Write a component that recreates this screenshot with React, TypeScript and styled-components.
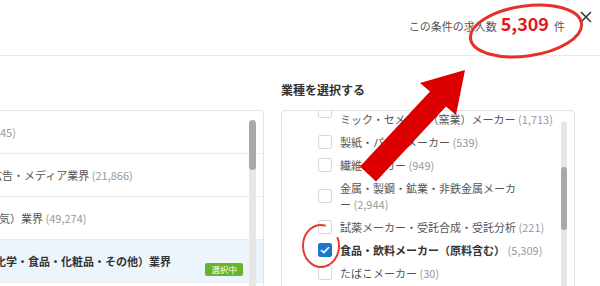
import React from "react";
import styled, { createGlobalStyle } from "styled-components";

const GlobalStyle = createGlobalStyle`
  html, body {
    margin: 0;
    padding: 0;
    background: #fff;
  }
  body {
    font-family: "Noto Sans CJK JP", "Noto Sans", sans-serif;
    color: #555;
  }
`;

const Page = styled.div`
  position: relative;
  width: 600px;
  height: 286px;
  overflow: hidden;
  background: #fff;
`;

const Header = styled.header`
  height: 56px;
  box-sizing: border-box;
  border-bottom: 1px solid #e8e8e8;
  display: flex;
  align-items: flex-start;
  justify-content: flex-end;
  padding-right: 8px;
`;

const Count = styled.div`
  display: flex;
  align-items: baseline;
  padding-top: 13px;
  line-height: 20px;
  font-size: 11px;
  color: #555;
`;

const Num = styled.strong`
  font-size: 18px;
  font-weight: 700;
  color: #e8141b;
  margin: 0 5px 0 4px;
`;

const Close = styled.button`
  border: 0;
  background: none;
  padding: 0;
  margin: 11px 0 0 15px;
  width: 12px;
  height: 12px;
  display: flex;
  color: #333;
`;

const Body = styled.div`
  display: grid;
  grid-template-columns: 300px 294px;
  grid-template-rows: 20px auto;
  column-gap: 17px;
  row-gap: 10px;
  margin-left: -36px;
  padding-top: 24px;
`;

const Title = styled.h3`
  grid-column: 2;
  grid-row: 1;
  margin: 0;
  font-size: 12px;
  line-height: 20px;
  font-weight: 700;
  color: #333;
`;

const Box = styled.div<{ $col: number }>`
  grid-column: ${(p) => p.$col};
  grid-row: 2;
  position: relative;
  height: 200px;
  border: 1px solid #e4e4e4;
  border-radius: 4px;
  overflow: hidden;
`;

const Track = styled.div<{ $right: number; $top: number; $w: number }>`
  position: absolute;
  right: ${(p) => p.$right}px;
  top: ${(p) => p.$top}px;
  bottom: 0;
  width: ${(p) => p.$w}px;
  border-radius: 4px;
  background: #e6e6e6;
`;

const Thumb = styled.div<{ $offset: number; $size: number }>`
  margin-top: ${(p) => p.$offset}px;
  height: ${(p) => p.$size}px;
  border-radius: 4px;
  background: #a9a9a9;
`;

const Row = styled.div<{ $selected?: boolean }>`
  display: flex;
  align-items: center;
  height: 42px;
  border-bottom: 1px solid #ebebeb;
  padding-right: 20px;
  font-size: 11px;
  line-height: 16px;
  white-space: nowrap;
  background: ${(p) => (p.$selected ? "#edf5fc" : "#fff")};
`;

const RowLabel = styled.span<{ $shift: number; $bold?: boolean }>`
  margin-left: ${(p) => p.$shift + 35}px;
  font-weight: ${(p) => (p.$bold ? 700 : 400)};
  color: ${(p) => (p.$bold ? "#333" : "#555")};
`;

const Muted = styled.span`
  color: #999;
  font-weight: 400;
  white-space: nowrap;
`;

const Badge = styled.span`
  margin-left: auto;
  align-self: flex-end;
  margin-bottom: 6px;
  height: 13px;
  line-height: 13px;
  padding: 0 6px;
  border-radius: 2px;
  background: #68b32c;
  color: #fff;
  font-size: 8.5px;
`;

const CheckList = styled.ul`
  list-style: none;
  margin: -20px 0 0;
  padding: 0 20px 0 36px;
`;

const Item = styled.li`
  display: flex;
  align-items: center;
  gap: 8px;
  padding: 3.5px 0;
  font-size: 11px;
  line-height: 16px;
`;

const Check = styled.span<{ $on?: boolean }>`
  flex-shrink: 0;
  width: 14px;
  height: 14px;
  box-sizing: border-box;
  border-radius: 2px;
  border: 1px solid ${(p) => (p.$on ? "#1b78cf" : "#d9d9d9")};
  background: ${(p) => (p.$on ? "#1b78cf" : "#fff")};
  display: flex;
  align-items: center;
  justify-content: center;
`;

const ItemText = styled.span<{ $bold?: boolean }>`
  flex: 1;
  color: ${(p) => (p.$bold ? "#333" : "#555")};
  font-weight: ${(p) => (p.$bold ? 700 : 400)};
`;

const Overlay = styled.svg`
  position: absolute;
  left: 0;
  top: 0;
  pointer-events: none;
`;

const rows = [
  { label: "", count: "(6,745)", shift: -19 },
  { label: "広告・メディア業界", count: "(21,866)", shift: -9 },
  { label: "電気）業界", count: "(49,274)", shift: -12 },
  { label: "化学・食品・化粧品・その他）業界", shift: -5, selected: true },
];

const items: { label: React.ReactNode; count: string; on?: boolean }[] = [
  {
    label: (
      <>
        ガラス・耐火物・セラ
        <br />
        ミック・セメント（窯業）メーカー
      </>
    ),
    count: "(1,713)",
  },
  { label: "製紙・パルプメーカー", count: "(539)" },
  { label: "繊維メーカー", count: "(949)" },
  { label: "金属・製鋼・鉱業・非鉄金属メーカー", count: "(2,944)" },
  { label: "試薬メーカー・受託合成・受託分析", count: "(221)" },
  { label: "食品・飲料メーカー（原料含む）", count: "(5,309)", on: true },
  { label: "たばこメーカー", count: "(30)" },
  { label: "化粧品メーカー", count: "(1,102)" },
];

const App = () => (
  <Page>
    <GlobalStyle />
    <Header>
      <Count>
        この条件の求人数<Num>5,309</Num>件
      </Count>
      <Close aria-label="閉じる">
        <svg width="12" height="12" viewBox="0 0 12 12">
          <path d="M1 1 L11 11 M11 1 L1 11" stroke="#333" strokeWidth="1.5" />
        </svg>
      </Close>
    </Header>

    <Body>
      <Title>業種を選択する</Title>

      <Box $col={1}>
        {rows.map((r) => (
          <Row key={r.count ?? r.label} $selected={r.selected}>
            <RowLabel $shift={r.shift} $bold={r.selected}>
              {r.label}
              {r.count && <Muted> {r.count}</Muted>}
            </RowLabel>
            {r.selected && <Badge>選択中</Badge>}
          </Row>
        ))}
        <Track $right={7} $top={9} $w={7}>
          <Thumb $offset={0} $size={50} />
        </Track>
      </Box>

      <Box $col={2}>
        <CheckList>
          {items.map((it) => (
            <Item key={it.count}>
              <Check $on={it.on}>
                {it.on && (
                  <svg width="10" height="8" viewBox="0 0 10 8">
                    <path
                      d="M1 4 L3.8 6.6 L9 1.2"
                      fill="none"
                      stroke="#fff"
                      strokeWidth="1.6"
                    />
                  </svg>
                )}
              </Check>
              <ItemText $bold={it.on}>
                {it.label}
                <Muted> {it.count}</Muted>
              </ItemText>
            </Item>
          ))}
        </CheckList>
        <Track $right={7} $top={10} $w={6}>
          <Thumb $offset={46} $size={63} />
        </Track>
      </Box>
    </Body>

    <Overlay width="600" height="286" viewBox="0 0 600 286">
      <ellipse
        cx="526"
        cy="31"
        rx="56"
        ry="25"
        transform="rotate(-8 526 31)"
        fill="none"
        stroke="#e8302a"
        strokeWidth="3"
      />
      <polygon
        points="465,70 456,115 446,106.5 376,181.5 360,166.5 430,91.5 420,83"
        fill="#dc0000"
      />
      <path
        d="M325.7 225.7 A18 21 0 1 0 337.3 237.1"
        fill="none"
        stroke="#e53a33"
        strokeWidth="2"
      />
    </Overlay>
  </Page>
);

export default App;
